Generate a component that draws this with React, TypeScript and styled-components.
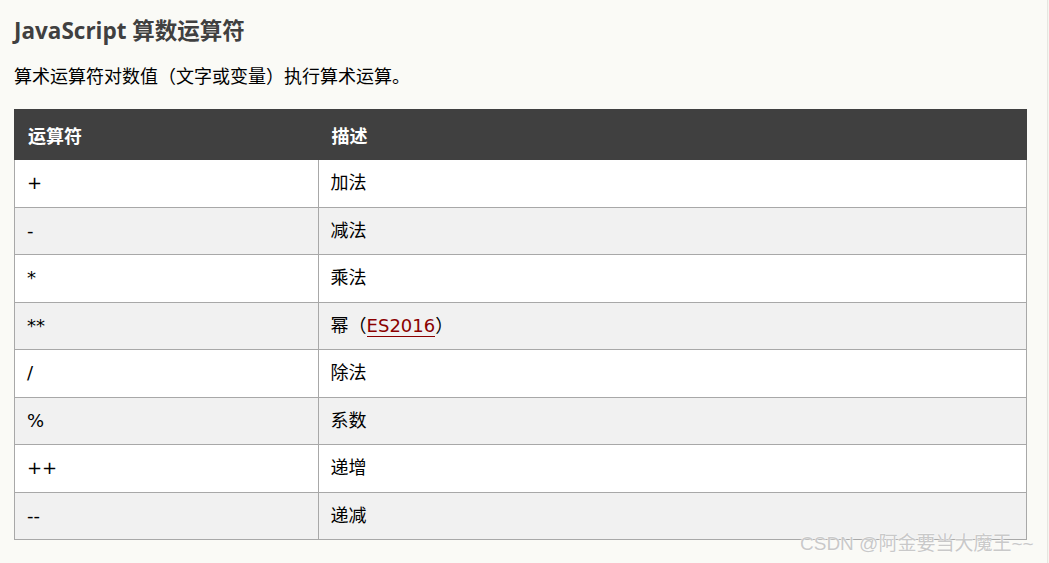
import React from "react";
import styled, { createGlobalStyle } from "styled-components";

const Global = createGlobalStyle`
  html, body { margin: 0; padding: 0; background: #fafaf6; }
  body { font-family: "Open Sans", "Noto Sans CJK SC", sans-serif; color: #000; }
`;

const Page = styled.div`
  position: relative;
  display: flex;
  width: 1049px;
  height: 563px;
  overflow: hidden;
  background: #fafaf6;
`;

const Main = styled.div`
  flex: 1;
  padding: 13px 20px 0 14px;
`;

const Rail = styled.div`
  width: 2px;
  border-left: 1px solid #e6e6e0;
  background: #f6f6f1;
`;

const Title = styled.h2`
  margin: 0;
  font-family: "Open Sans", "Noto Sans CJK SC", sans-serif;
  font-weight: 700;
  font-size: 22.5px;
  line-height: 36px;
  color: #404040;
`;

const Lead = styled.p`
  margin: 14px 0 0;
  font-family: "DejaVu Sans", "Noto Sans CJK SC", sans-serif;
  font-size: 18px;
  line-height: 28px;
  color: #000;
`;

const Table = styled.table`
  margin-top: 18px;
  width: 1013px;
  border-collapse: collapse;
  font-family: "DejaVu Sans", "Noto Sans CJK SC", sans-serif;
  font-size: 18px;
  color: #000;
`;

const HeadCell = styled.th<{ $w?: string }>`
  width: ${(p) => p.$w ?? "auto"};
  height: 50px;
  box-sizing: border-box;
  padding: 0 12px 0 13px;
  text-align: left;
  background: #404040;
  color: #fff;
  font-weight: 700;
  font-size: 18px;
  border: 1px solid #404040;
`;

const Row = styled.tr<{ $alt: boolean }>`
  background: ${(p) => (p.$alt ? "#f1f1f1" : "#ffffff")};
`;

const Cell = styled.td`
  height: 47.5px;
  box-sizing: border-box;
  padding: 0 12px 0 12px;
  border: 1px solid #a8a8a8;
  line-height: 24px;
`;

const Link = styled.a`
  color: #8b0000;
  text-decoration: none;
  border-bottom: 1px solid #8b0000;
`;

const Watermark = styled.div`
  position: absolute;
  left: 800px;
  top: 531px;
  font-family: "Liberation Sans", "Noto Sans CJK SC", sans-serif;
  font-size: 19px;
  line-height: 26px;
  color: #c9c9c9;
  text-shadow: 0 0 2px #fff, 0 0 1px #fff;
  white-space: nowrap;
`;

const rows: Array<[string, React.ReactNode]> = [
  ["+", "加法"],
  ["-", "减法"],
  ["*", "乘法"],
  ["**", <>幂（<Link href="#">ES2016</Link>）</>],
  ["/", "除法"],
  ["%", "系数"],
  ["++", "递增"],
  ["--", "递减"],
];

export default function App() {
  return (
    <Page>
      <Global />
      <Main>
        <Title>JavaScript 算数运算符</Title>
        <Lead>算术运算符对数值（文字或变量）执行算术运算。</Lead>
        <Table>
          <thead>
            <tr>
              <HeadCell $w="30%">运算符</HeadCell>
              <HeadCell>描述</HeadCell>
            </tr>
          </thead>
          <tbody>
            {rows.map(([op, desc], i) => (
              <Row key={op} $alt={i % 2 === 1}>
                <Cell>{op}</Cell>
                <Cell>{desc}</Cell>
              </Row>
            ))}
          </tbody>
        </Table>
      </Main>
      <Rail />
      <Watermark>CSDN @阿金要当大魔王~~</Watermark>
    </Page>
  );
}
